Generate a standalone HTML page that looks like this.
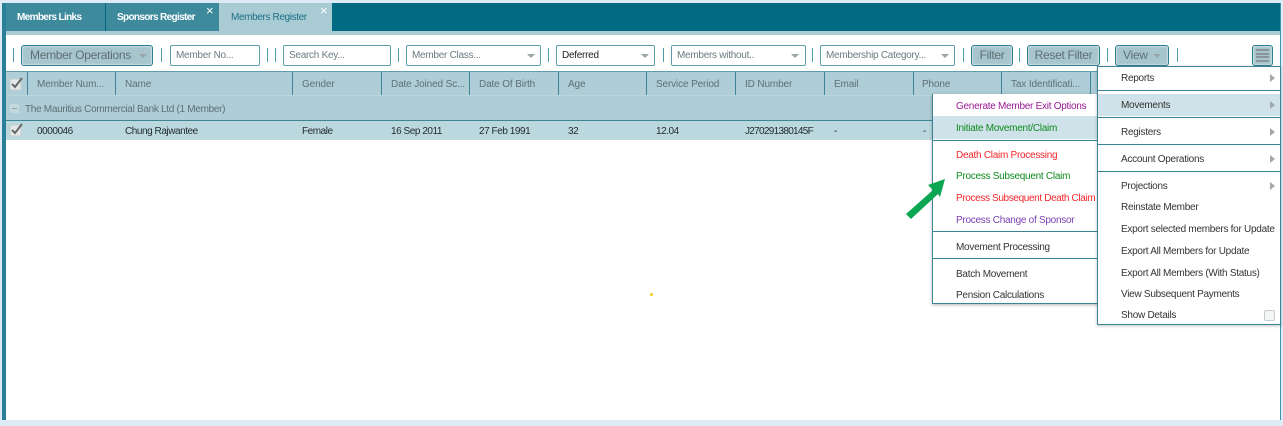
<!DOCTYPE html>
<html><head><meta charset="utf-8"><style>
html,body{margin:0;padding:0;background:#deeaf5;}
#p{position:relative;width:1283px;height:426px;overflow:hidden;background:#deeaf5;font-family:"Liberation Sans",sans-serif;font-size:10px;letter-spacing:-.27px;color:#222;}
#p div,#p span.t{position:absolute;box-sizing:border-box;white-space:nowrap;}
.t{line-height:16px;}
.b{font-weight:bold;color:#fff;letter-spacing:-.65px;}
.box{height:21px;border:1px solid #5f9fad;border-radius:2px;background:#fff;color:#6b7b80;line-height:20px;padding-left:5px;top:45px;}
.btn{height:21px;top:45px;border:1px solid #2f7f92;border-radius:3px;background:#a6c5cd;color:#5f6f74;font-size:12px;letter-spacing:-.3px;line-height:18px;text-align:center;box-shadow:inset 0 0 2px #fff;}
.sep{width:1px;height:14px;top:48px;background:#4f9bab;}
.arr{width:0;height:0;border-left:4px solid transparent;border-right:4px solid transparent;border-top:4px solid #9aa5a8;}
.hs{width:1px;height:23px;top:72px;background:#3d8596;}
.h{top:77px;color:#5f6f74;letter-spacing:-.13px;}
.r{top:124px;color:#1f2a2e;letter-spacing:-.45px;}
.line{height:1px;background:#3d8596;}
.mt{color:#333;}
.tri{width:0;height:0;border-top:4px solid transparent;border-bottom:4px solid transparent;border-left:5px solid #a3a8aa;}
</style></head><body><div id="p">
<div style="left:2px;top:3px;width:1278px;height:417px;background:#fff"></div>
<div style="left:2px;top:3px;width:4px;height:417px;background:#2a8099"></div>
<div style="left:1280px;top:3px;width:1px;height:417px;background:#3d96a8"></div>
<div style="left:6px;top:3px;width:1274px;height:28px;background:#006a82"></div>
<div style="left:6px;top:31px;width:1274px;height:4px;background:#a8cbd4"></div>

<div style="left:6px;top:3px;width:99px;height:28px;background:#3d8a9d"></div>
<div style="left:106px;top:3px;width:113px;height:28px;background:#3d8a9d"></div>
<div style="left:219px;top:3px;width:113px;height:28px;background:#a8cbd4"></div>
<span class="t b" style="left:17px;top:10px">Members Links</span>
<span class="t b" style="left:117px;top:10px">Sponsors Register</span>
<span class="t" style="left:231px;top:10px;color:#1d6f85;letter-spacing:-.37px">Members Register</span>
<span class="t" style="left:206px;top:3px;color:#fff;font-size:13px">×</span>
<span class="t" style="left:320px;top:3px;color:#fff;font-size:13px">×</span>

<div class="sep" style="left:13px"></div>
<div class="btn" style="left:21px;width:132px;text-align:left;padding-left:8px">Member Operations</div>
<div class="arr" style="left:139px;top:54px"></div>
<div class="sep" style="left:161px"></div>
<div class="box" style="left:170px;width:90px">Member No...</div>
<div class="sep" style="left:267px"></div><div class="sep" style="left:275px"></div>
<div class="box" style="left:283px;width:108px">Search Key...</div>
<div class="sep" style="left:398px"></div>
<div class="box" style="left:406px;width:135px">Member Class...</div>
<div class="arr" style="left:527px;top:54px"></div>
<div class="sep" style="left:548px"></div>
<div class="box" style="left:556px;width:99px;color:#222">Deferred</div>
<div class="arr" style="left:641px;top:54px"></div>
<div class="sep" style="left:663px"></div>
<div class="box" style="left:671px;width:135px">Members without..</div>
<div class="arr" style="left:791px;top:54px"></div>
<div class="sep" style="left:812px"></div>
<div class="box" style="left:820px;width:135px">Membership Category...</div>
<div class="arr" style="left:941px;top:54px"></div>
<div class="sep" style="left:963px"></div>
<div class="btn" style="left:971px;width:42px">Filter</div>
<div class="sep" style="left:1019px"></div>
<div class="btn" style="left:1027px;width:73px">Reset Filter</div>
<div class="sep" style="left:1107px"></div>
<div class="btn" style="left:1115px;width:54px;text-align:left;padding-left:7px">View</div>
<div class="arr" style="left:1153px;top:54px"></div>
<div class="sep" style="left:1177px"></div>
<div class="btn" style="left:1252px;width:21px">
  <div style="left:3px;top:3px;width:13px;height:2px;background:#8a9599"></div>
  <div style="left:3px;top:7px;width:13px;height:2px;background:#8a9599"></div>
  <div style="left:3px;top:10px;width:13px;height:2px;background:#8a9599"></div>
  <div style="left:3px;top:14px;width:13px;height:2px;background:#8a9599"></div>
</div>

<div style="left:6px;top:71px;width:1274px;height:49px;background:#aecdd6"></div>
<div style="left:6px;top:71px;width:1274px;height:1px;background:#5f9fad"></div>
<div style="left:6px;top:95px;width:1274px;height:1px;background:#bcd6dd"></div>
<div style="left:6px;top:120px;width:1274px;height:1px;background:#3d8596"></div>
<div style="left:6px;top:121px;width:1274px;height:19px;background:#bcd8df"></div>
<svg style="position:absolute;left:9px;top:76px" width="16" height="15" viewBox="0 0 16 15"><rect x="1" y="3" width="11" height="11" rx="1.5" fill="#e6e9ea" stroke="#c3ccce"/><path d="M3 8 L6 11 L13 2" fill="none" stroke="#666" stroke-width="2"/></svg>
<svg style="position:absolute;left:9px;top:122px" width="16" height="15" viewBox="0 0 16 15"><rect x="1" y="3" width="11" height="11" rx="1.5" fill="#e6e9ea" stroke="#c3ccce"/><path d="M3 8 L6 11 L13 2" fill="none" stroke="#666" stroke-width="2"/></svg>
<div class="hs" style="left:27px"></div><div class="hs" style="left:115px"></div><div class="hs" style="left:292px"></div><div class="hs" style="left:381px"></div><div class="hs" style="left:469px"></div><div class="hs" style="left:558px"></div><div class="hs" style="left:646px"></div><div class="hs" style="left:735px"></div><div class="hs" style="left:824px"></div><div class="hs" style="left:913px"></div><div class="hs" style="left:1001px"></div><div class="hs" style="left:1090px"></div>
<span class="t h" style="left:37px">Member Num...</span>
<span class="t h" style="left:125px">Name</span>
<span class="t h" style="left:302px">Gender</span>
<span class="t h" style="left:391px">Date Joined Sc...</span>
<span class="t h" style="left:479px">Date Of Birth</span>
<span class="t h" style="left:568px">Age</span>
<span class="t h" style="left:656px">Service Period</span>
<span class="t h" style="left:745px">ID Number</span>
<span class="t h" style="left:834px">Email</span>
<span class="t h" style="left:922px">Phone</span>
<span class="t h" style="left:1011px">Tax Identificati...</span>
<div style="left:10px;top:104px;width:9px;height:9px;background:#c5d8dd;border-radius:1px"></div>
<div style="left:12px;top:108px;width:5px;height:1px;background:#8fa5ab"></div>
<span class="t" style="left:25px;top:102px;color:#5f6f74;letter-spacing:-.3px">The Mauritius Commercial Bank Ltd (1 Member)</span>
<span class="t r" style="left:37px">0000046</span>
<span class="t r" style="left:125px">Chung Rajwantee</span>
<span class="t r" style="left:302px">Female</span>
<span class="t r" style="left:391px">16 Sep 2011</span>
<span class="t r" style="left:479px">27 Feb 1991</span>
<span class="t r" style="left:568px">32</span>
<span class="t r" style="left:656px">12.04</span>
<span class="t r" style="left:745px;letter-spacing:-.7px">J270291380145F</span>
<span class="t r" style="left:834px">-</span>
<span class="t r" style="left:923px">-</span>

<div style="left:932px;top:94px;width:166px;height:210px;background:#fff;border:1px solid #3d8596;border-top:0;border-right:0;box-shadow:0 1px 3px rgba(0,0,0,.3)"></div>
<div style="left:933px;top:116px;width:165px;height:23px;background:#d0e2e9"></div>
<div class="line" style="left:933px;top:140px;width:165px"></div>
<div class="line" style="left:933px;top:231px;width:165px"></div>
<div class="line" style="left:933px;top:258px;width:165px"></div>
<span class="t" style="left:956px;top:99px;color:#9a1a96">Generate Member Exit Options</span>
<span class="t" style="left:956px;top:121px;color:#0f8a1f">Initiate Movement/Claim</span>
<span class="t" style="left:956px;top:148px;color:#f5262c">Death Claim Processing</span>
<span class="t" style="left:956px;top:169px;color:#0f8a1f">Process Subsequent Claim</span>
<span class="t" style="left:956px;top:191px;color:#f5262c;letter-spacing:-.36px">Process Subsequent Death Claim</span>
<span class="t" style="left:956px;top:213px;color:#7a3fb5">Process Change of Sponsor</span>
<span class="t mt" style="left:956px;top:240px">Movement Processing</span>
<span class="t mt" style="left:956px;top:267px">Batch Movement</span>
<span class="t mt" style="left:956px;top:288px">Pension Calculations</span>

<svg style="position:absolute;left:900px;top:176px" width="52" height="46" viewBox="0 0 52 46"><path d="M45 3 L28 9 L33 14 L6 38 L11 43 L38 18 L40 21 Z" fill="#0aa651"/></svg>

<div style="left:1097px;top:66px;width:184px;height:259px;background:#fff;border:1px solid #3d8596;box-shadow:0 1px 3px rgba(0,0,0,.25)"></div>
<div style="left:1098px;top:94px;width:182px;height:22px;background:#d0e2e9"></div>
<div class="line" style="left:1098px;top:90px;width:182px"></div>
<div class="line" style="left:1098px;top:117px;width:182px"></div>
<div class="line" style="left:1098px;top:144px;width:182px"></div>
<div class="line" style="left:1098px;top:171px;width:182px"></div>
<span class="t mt" style="left:1121px;top:71px">Reports</span>
<span class="t mt" style="left:1121px;top:98px">Movements</span>
<span class="t mt" style="left:1121px;top:125px">Registers</span>
<span class="t mt" style="left:1121px;top:152px">Account Operations</span>
<span class="t mt" style="left:1121px;top:179px">Projections</span>
<span class="t mt" style="left:1121px;top:200px">Reinstate Member</span>
<span class="t mt" style="left:1121px;top:222px">Export selected members for Update</span>
<span class="t mt" style="left:1121px;top:244px">Export All Members for Update</span>
<span class="t mt" style="left:1121px;top:266px">Export All Members (With Status)</span>
<span class="t mt" style="left:1121px;top:287px">View Subsequent Payments</span>
<span class="t mt" style="left:1121px;top:308px">Show Details</span>
<div class="tri" style="left:1270px;top:74px"></div>
<div class="tri" style="left:1270px;top:101px"></div>
<div class="tri" style="left:1270px;top:128px"></div>
<div class="tri" style="left:1270px;top:155px"></div>
<div class="tri" style="left:1270px;top:182px"></div>
<div style="left:1264px;top:310px;width:11px;height:11px;background:#f4f6f6;border:1px solid #c5cdd0;border-radius:2px"></div>
<div style="left:650px;top:293px;width:3px;height:3px;background:#f2d21a;border-radius:50%"></div>
</div></body></html>
